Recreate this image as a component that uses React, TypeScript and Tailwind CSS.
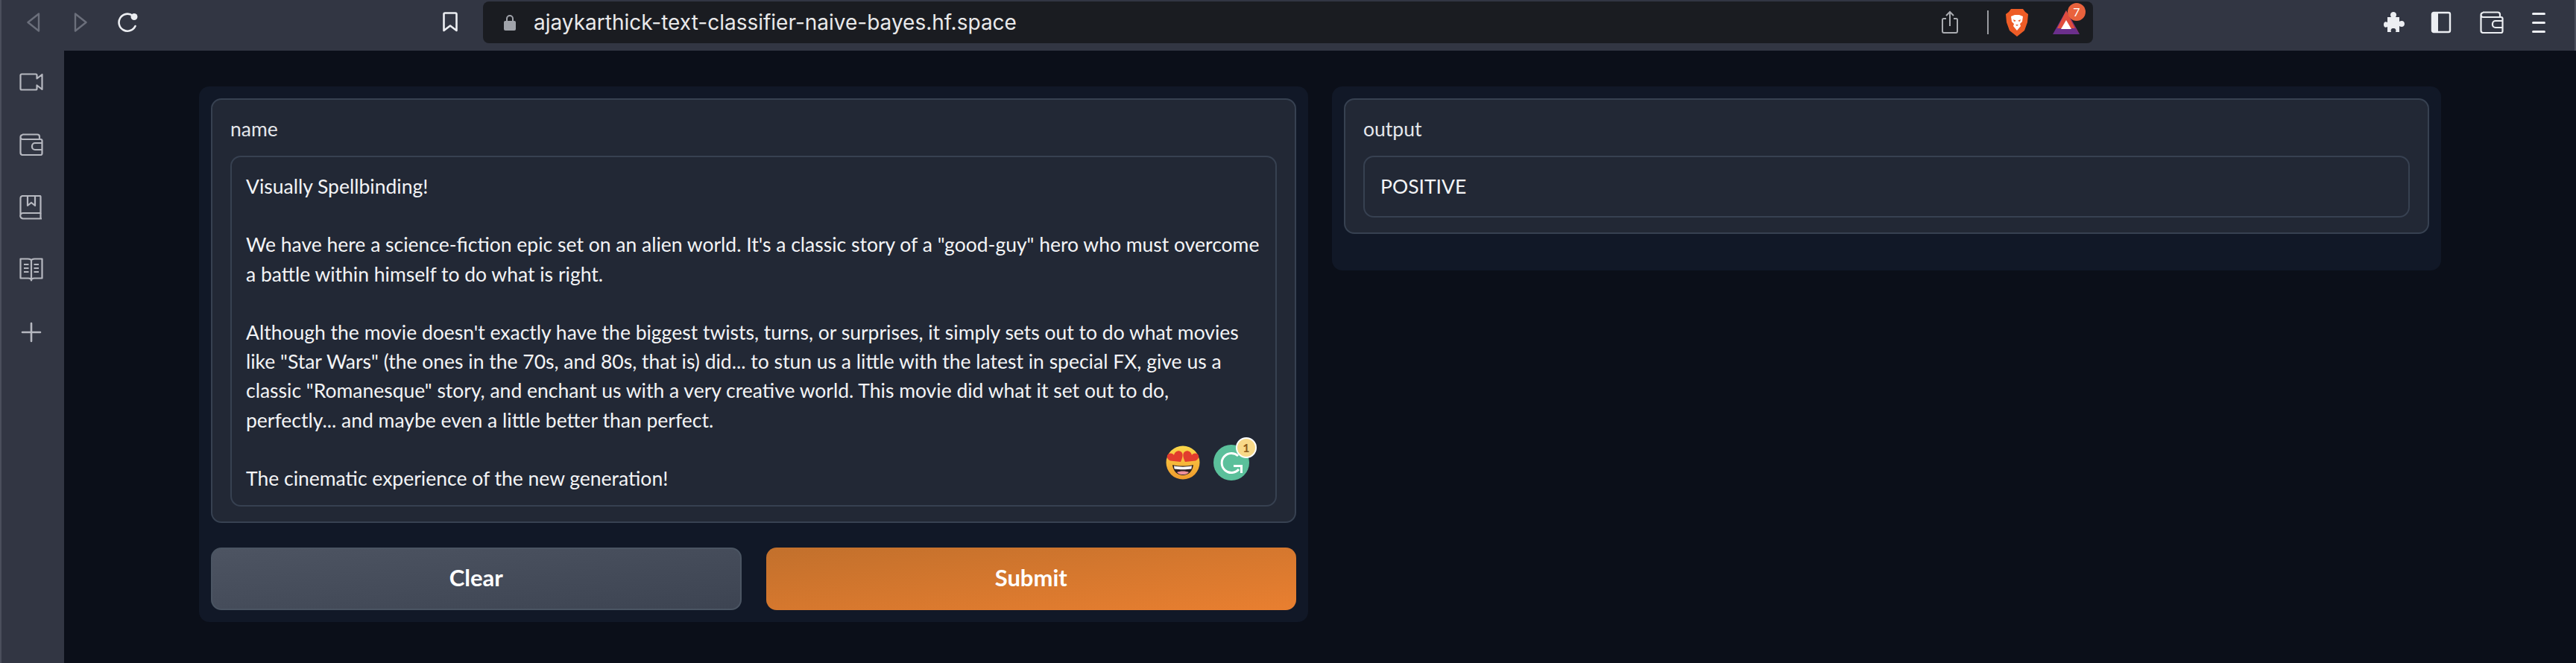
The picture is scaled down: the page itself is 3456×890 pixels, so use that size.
import React from "react";

const bodyFont = "font-['Lato','Noto_Sans',sans-serif]";

const reviewLines = [
  "Visually Spellbinding!",
  "",
  "We have here a science-fiction epic set on an alien world. It's a classic story of a \"good-guy\" hero who must overcome",
  "a battle within himself to do what is right.",
  "",
  "Although the movie doesn't exactly have the biggest twists, turns, or surprises, it simply sets out to do what movies",
  "like \"Star Wars\" (the ones in the 70s, and 80s, that is) did... to stun us a little with the latest in special FX, give us a",
  "classic \"Romanesque\" story, and enchant us with a very creative world. This movie did what it set out to do,",
  "perfectly... and maybe even a little better than perfect.",
  "",
  "The cinematic experience of the new generation!",
];

function Back({ flip }: { flip?: boolean }) {
  return (
    <svg width="20" height="26" viewBox="0 0 20 26" fill="none" className={flip ? "-scale-x-100" : ""}>
      <path d="M17 1.5 2.5 13 17 24.5Z" stroke="#6b6f7b" strokeWidth="2.4" strokeLinejoin="round" />
    </svg>
  );
}

function Reload() {
  return (
    <svg width="30" height="28" viewBox="0 0 30 28" fill="none">
      <path d="M21 5A11.5 11.5 0 1 0 24.5 19" stroke="#eceef2" strokeWidth="2.6" strokeLinecap="round" />
      <circle cx="23" cy="6.5" r="4.5" fill="#eceef2" />
    </svg>
  );
}

function Bookmark() {
  return (
    <svg width="22" height="28" viewBox="0 0 22 28" fill="none">
      <path d="M2.5 3a1.5 1.5 0 0 1 1.5-1.5h14A1.5 1.5 0 0 1 19.5 3v22L11 18.5 2.5 25Z" stroke="#eceef2" strokeWidth="2.6" strokeLinejoin="round" />
    </svg>
  );
}

function Lock() {
  return (
    <svg width="18" height="24" viewBox="0 0 18 24" fill="none">
      <path d="M5 11V7a4 4 0 0 1 8 0v4" stroke="#a0a3aa" strokeWidth="2" />
      <rect x="1" y="10" width="16" height="13" rx="2" fill="#a0a3aa" />
    </svg>
  );
}

function Share() {
  return (
    <svg width="24" height="32" viewBox="0 0 24 32" fill="none" stroke="#a9abb0" strokeWidth="2">
      <path d="M7 11H3.5A1.5 1.5 0 0 0 2 12.5V28a2 2 0 0 0 2 2h16a2 2 0 0 0 2-2V12.5A1.5 1.5 0 0 0 20.5 11H17" />
      <path d="M12 21V2M7 7l5-5 5 5" />
    </svg>
  );
}

function BraveLogo() {
  return (
    <svg width="32" height="38" viewBox="0 0 32 38">
      <path d="M8 1h16l3 4 4 3-1 11-4 11-10 8-10-8-4-11L1 8l4-3Z" fill="#ee5c26" />
      <path d="M8 11l5-2h6l5 2-1 7-3 3 1 3-5 6-5-6 1-3-3-3Z" fill="#fff" />
      <path d="M11 15l4 2-3 1ZM21 15l-4 2 3 1Z" fill="#ee5c26" />
      <path d="M14 22h4l-2 2Z" fill="#ee5c26" />
    </svg>
  );
}

function RewardsLogo() {
  return (
    <div className="relative w-[36px] h-[32px]">
      <svg width="36" height="32" viewBox="0 0 36 32">
        <path d="M18 0 36 32H0Z" fill="#6b2f8c" />
        <path d="M18 0 6 24h24Z" fill="#e04c3d" />
        <path d="M18 0 30 24l6 8Z" fill="#8e2f6a" />
        <path d="M18 13 25 25H11Z" fill="#fff" />
      </svg>
      <span className={`absolute -top-[10px] left-[20px] w-[24px] h-[24px] rounded-full bg-[#e9623d] text-white text-[16px] leading-[24px] text-center ${bodyFont}`}>7</span>
    </div>
  );
}

function Puzzle() {
  return (
    <svg width="30" height="30" viewBox="0 0 30 30">
      <path d="M6 8h5c-2-3-1-7 3-7s5 4 3 7h5v6c3-2 7-1 7 3s-4 5-7 3v8h-5c1-3 0-5-3-5s-4 2-3 5H6v-7C3 23 1 21 1 18s2-5 5-3Z" fill="#eceef2" />
    </svg>
  );
}

function SidebarToggle() {
  return (
    <svg width="28" height="30" viewBox="0 0 28 30" fill="none">
      <rect x="2" y="2" width="24" height="26" rx="2" stroke="#eceef2" strokeWidth="2.4" />
      <rect x="2" y="2" width="8" height="26" fill="#eceef2" />
    </svg>
  );
}

function Wallet({ color }: { color: string }) {
  return (
    <svg width="32" height="30" viewBox="0 0 32 30" fill="none" stroke={color} strokeWidth="2.2" strokeLinejoin="round">
      <path d="M4 1.5h20a3 3 0 0 1 3 3v3" />
      <path d="M1.5 5v21a3 3 0 0 0 3 3h24a2 2 0 0 0 2-2V10a2 2 0 0 0-2-2H4.5a3 3 0 0 1-3-3 3 3 0 0 1 3-3" />
      <path d="M30.5 13H21a4 4 0 0 0-4 4v1a4 4 0 0 0 4 4h9.5" />
    </svg>
  );
}

function Menu() {
  return (
    <div className="flex flex-col gap-[9px]">
      <div className="w-[18px] h-[3px] rounded-sm bg-[#eceef2]" />
      <div className="w-[18px] h-[3px] rounded-sm bg-[#eceef2]" />
      <div className="w-[18px] h-[3px] rounded-sm bg-[#eceef2]" />
    </div>
  );
}

function VideoIcon() {
  return (
    <svg width="32" height="24" viewBox="0 0 32 24" fill="none" stroke="#b6b8c0" strokeWidth="2.2" strokeLinejoin="round">
      <path d="M3 1.5h19a1.5 1.5 0 0 1 1.5 1.5v4.5l7-5.5v20l-7-5.5V21a1.5 1.5 0 0 1-1.5 1.5H3A1.5 1.5 0 0 1 1.5 21V3A1.5 1.5 0 0 1 3 1.5Z" />
    </svg>
  );
}

function BookmarkBook() {
  return (
    <svg width="32" height="33" viewBox="0 0 32 33" fill="none" stroke="#b6b8c0" strokeWidth="2.2" strokeLinejoin="round">
      <path d="M1.5 26V4a3 3 0 0 1 3-3h23a1 1 0 0 1 1 1v22H5a3.5 3.5 0 0 0 0 7.5h25" />
      <path d="M28.5 24v7.5" />
      <path d="M11 1v13l5-4 5 4V1" />
    </svg>
  );
}

function ReaderIcon() {
  return (
    <svg width="32" height="33" viewBox="0 0 32 33" fill="none" stroke="#b6b8c0" strokeWidth="2.2" strokeLinejoin="round">
      <path d="M1.5 1.5h10c2.5 0 4.5 1 4.5 3 0-2 2-3 4.5-3h10v26H20c-2 0-4 1-4 3 0-2-2-3-4-3H1.5Z" />
      <path d="M16 4.5v26M6 9h6.5M6 14h6.5M6 19h6.5M19.5 9H26M19.5 14H26M19.5 19H26" />
    </svg>
  );
}

function PlusIcon() {
  return (
    <svg width="28" height="28" viewBox="0 0 28 28" stroke="#b6b8c0" strokeWidth="2.6" strokeLinecap="round">
      <path d="M14 2v24M2 14h24" />
    </svg>
  );
}

function HeartEyes() {
  return (
    <svg width="46" height="46" viewBox="0 0 46 46">
      <defs>
        <linearGradient id="faceGrad" x1="0" y1="0" x2="0" y2="1">
          <stop offset="0" stopColor="#fbd84a" />
          <stop offset="1" stopColor="#f09a2c" />
        </linearGradient>
      </defs>
      <circle cx="23" cy="23" r="22.5" fill="url(#faceGrad)" />
      <path d="M9 26c8 2 20 2 28 0-1 9-7 14-14 14S10 35 9 26Z" fill="#2b2024" />
      <path d="M11 27.5c7 1.5 17 1.5 24 0l-.6 4c-7 1-16 1-22.8 0Z" fill="#fff" />
      <path d="M15 36c4-2 12-2 16 0-2 2.5-5 3-8 3s-6-.5-8-3Z" fill="#f0909a" />
      <path d="M20 22 6 20.5C1 18 .5 13 4 11c3-1.5 6 0 7 2 1-5 6-7 9-5 4 2 3 8 0 14Z" fill="#e23d2e" />
      <path d="M26 22l14-1.5c5-2.5 5.500-7.500 2-9.500-3-1.500-6 0-7 2-1-5-6-7-9-5-4 2-3 8 0 14Z" fill="#e23d2e" />
    </svg>
  );
}

function GrammarlyBadge() {
  return (
    <div className="relative w-[48px] h-[48px] rounded-full bg-[#5bc09b]">
      <svg width="48" height="48" viewBox="0 0 48 48" fill="none" stroke="#fff" strokeWidth="3">
        <path d="M33 15A13 13 0 1 0 34 33" />
        <path d="M27 28.5h10.5V38" />
      </svg>
      <span className={`absolute -top-[10px] left-[30px] w-[28px] h-[28px] rounded-full bg-[#f8d988] border-2 border-white text-[#8a5a1c] text-[16px] leading-[24px] font-bold text-center ${bodyFont}`}>1</span>
    </div>
  );
}

function Field({ label, children }: { label: string; children: React.ReactNode }) {
  return (
    <div className="rounded-[14px] border-2 border-[#374151] bg-[#222835] px-[24px] pt-[22px] pb-[20px]">
      <div className="text-[26.5px] leading-[34px] mb-[19px] text-[#e5e7eb]">{label}</div>
      {children}
    </div>
  );
}

export default function App() {
  return (
    <div className={`w-[3456px] h-[890px] overflow-hidden flex flex-col bg-[#0b0f19] ${bodyFont}`}>
      {/* browser toolbar */}
      <div className="h-[68px] shrink-0 bg-[#323643] flex items-center pb-[8px] border-x-2 border-[#4b4f5c]">
        <div className="w-[20px] ml-[33px] flex justify-center"><Back /></div>
        <div className="w-[20px] ml-[43px] flex justify-center"><Back flip /></div>
        <div className="w-[30px] ml-[39px] flex justify-center"><Reload /></div>
        <div className="w-[22px] ml-[406px] flex justify-center"><Bookmark /></div>
        <div className="ml-[33px] w-[2160px] h-[56px] rounded-lg bg-[#1a1c21] flex items-center pl-[27px]">
          <Lock />
          <span className="ml-[23px] text-[28px] text-[#e9e9ea] font-['Inter',sans-serif]">ajaykarthick-text-classifier-naive-bayes.hf.space</span>
          <div className="ml-auto flex items-center">
            <Share />
            <div className="w-[2px] h-[32px] bg-[#9a9ca1] ml-[38px]" />
            <div className="ml-[22px]"><BraveLogo /></div>
            <div className="ml-[32px] mr-[18px]"><RewardsLogo /></div>
          </div>
        </div>
        <div className="ml-[389px]"><Puzzle /></div>
        <div className="ml-[34px]"><SidebarToggle /></div>
        <div className="ml-[38px]"><Wallet color="#eceef2" /></div>
        <div className="ml-[38px]"><Menu /></div>
      </div>

      <div className="flex flex-1 min-h-0">
        {/* browser sidebar */}
        <div className="w-[86px] shrink-0 bg-[#323643] border-l-2 border-[#4b4f5c] pr-[4px] flex flex-col items-center">
          <div className="h-[84px] flex items-center"><VideoIcon /></div>
          <div className="h-[84px] flex items-center"><Wallet color="#b6b8c0" /></div>
          <div className="h-[84px] flex items-center"><BookmarkBook /></div>
          <div className="h-[84px] flex items-center"><ReaderIcon /></div>
          <div className="h-[84px] flex items-center"><PlusIcon /></div>
        </div>

        {/* gradio app */}
        <div className="flex-1 flex justify-center pt-[48px] items-start">
          <div className="w-[3008px] grid grid-cols-2 gap-[32px] items-start text-[#f3f4f6]">
            <div className="rounded-[14px] bg-[#111827] p-[16px]">
              <Field label="name">
                <div className="relative h-[471px] rounded-[14px] border-2 border-[#374151] bg-[#222835] pl-[19px] pt-[20px] text-[26.5px] leading-[39.2px]">
                  {reviewLines.map((line, i) => (
                    <div key={i} className="h-[39.2px] whitespace-nowrap">{line}</div>
                  ))}
                  <div className="absolute right-[35px] top-[386px] flex items-center gap-[18px]">
                    <HeartEyes />
                    <GrammarlyBadge />
                  </div>
                </div>
              </Field>
              <div className="grid grid-cols-2 gap-[33px] mt-[33px]">
                <button className="h-[84px] pb-[3px] rounded-[14px] border-2 border-[#4b5563] bg-gradient-to-br from-[#4d5462] to-[#3d4452] text-white text-[31px] font-bold">Clear</button>
                <button className="h-[84px] pb-[3px] rounded-[14px] bg-gradient-to-br from-[#c2702c] to-[#e97f30] text-white text-[31px] font-bold">Submit</button>
              </div>
            </div>

            <div className="rounded-[14px] bg-[#111827] p-[16px] pb-[49px]">
              <Field label="output">
                <div className="h-[83px] rounded-[14px] border-2 border-[#374151] bg-[#222835] px-[21px] flex items-center text-[26.5px]">POSITIVE</div>
              </Field>
            </div>
          </div>
        </div>
      </div>
    </div>
  );
}
